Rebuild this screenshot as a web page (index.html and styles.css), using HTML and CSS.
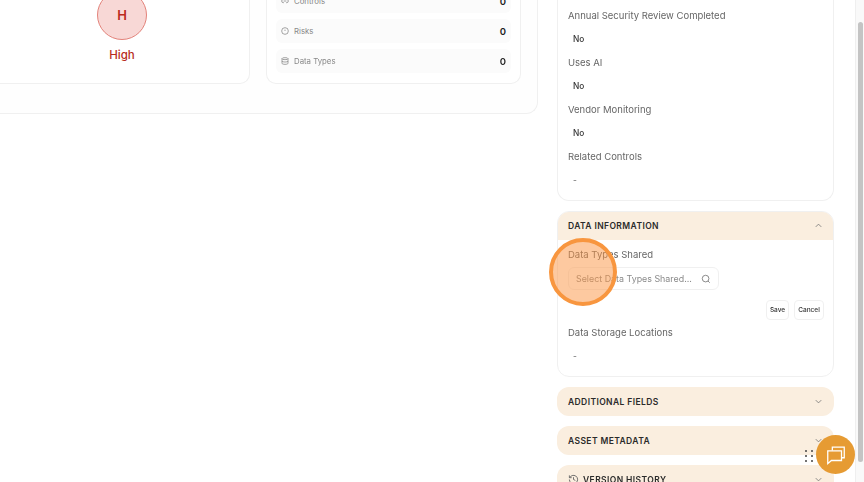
FILE: index.html
```html
<!DOCTYPE html>
<html lang="en">
<head>
<meta charset="utf-8">
<title>Vendor details</title>
<link rel="stylesheet" href="styles.css">
</head>
<body>
<div class="page">
  <main class="main">
    <div class="main-card">
      <section class="card risk-card">
        <div class="risk-circle">H</div>
        <div class="risk-label">High</div>
      </section>
      <section class="card stats-card">
        <div class="stat">
          <span class="stat-name">
            <svg class="stat-icon" viewBox="0 0 24 24"><path d="M9 17H7A5 5 0 0 1 7 7h2M15 7h2a5 5 0 0 1 0 10h-2M8 12h8"/></svg>
            Controls
          </span>
          <span class="stat-value">0</span>
        </div>
        <div class="stat">
          <span class="stat-name">
            <svg class="stat-icon" viewBox="0 0 24 24"><circle cx="12" cy="12" r="10"/><path d="M12 8v4M12 16h.01"/></svg>
            Risks
          </span>
          <span class="stat-value">0</span>
        </div>
        <div class="stat">
          <span class="stat-name">
            <svg class="stat-icon" viewBox="0 0 24 24"><ellipse cx="12" cy="5" rx="9" ry="3"/><path d="M3 5v14c0 1.7 4 3 9 3s9-1.300 9-3V5M3 12c0 1.700 4 3 9 3s9-1.300 9-3"/></svg>
            Data Types
          </span>
          <span class="stat-value">0</span>
        </div>
      </section>
    </div>
  </main>

  <aside class="panel">
    <section class="panel-card top-card">
      <div class="field"><div class="field-label">Annual Security Review Completed</div><div class="field-value">No</div></div>
      <div class="field"><div class="field-label">Uses AI</div><div class="field-value">No</div></div>
      <div class="field"><div class="field-label">Vendor Monitoring</div><div class="field-value">No</div></div>
      <div class="field"><div class="field-label">Related Controls</div><div class="field-value muted">-</div></div>
    </section>

    <section class="panel-card data-card">
      <header class="acc-head">
        <span class="acc-title">DATA INFORMATION</span>
        <svg class="chev" viewBox="0 0 24 24"><path d="M6 15l6-6 6 6"/></svg>
      </header>
      <div class="data-body">
        <div class="field-label">Data Types Shared</div>
        <div class="select">
          <span class="select-text">Select Data Types Shared...</span>
          <svg class="search" viewBox="0 0 24 24"><circle cx="11" cy="11" r="8"/><path d="M21 21l-4.300-4.300"/></svg>
        </div>
        <div class="actions">
          <button class="btn btn-save">Save</button>
          <button class="btn btn-cancel">Cancel</button>
        </div>
        <div class="field-label storage-label">Data Storage Locations</div>
        <div class="field-value muted">-</div>
      </div>
    </section>

    <section class="acc-closed">
      <span class="acc-title">ADDITIONAL FIELDS</span>
      <svg class="chev" viewBox="0 0 24 24"><path d="M6 9l6 6 6-6"/></svg>
    </section>
    <section class="acc-closed">
      <span class="acc-title">ASSET METADATA</span>
      <svg class="chev" viewBox="0 0 24 24"><path d="M6 9l6 6 6-6"/></svg>
    </section>
    <section class="acc-closed">
      <span class="acc-title with-icon">
        <svg class="history" viewBox="0 0 24 24"><path d="M3 12a9 9 0 1 0 2.600-6.400L3 8M3 3v5h5M12 7v5l4 2"/></svg>
        VERSION HISTORY
      </span>
      <svg class="chev" viewBox="0 0 24 24"><path d="M6 9l6 6 6-6"/></svg>
    </section>
  </aside>

  <div class="scrollbar"><div class="thumb"></div></div>

  <div class="click-marker"></div>

  <div class="drag-dots"><i></i><i></i><i></i><i></i><i></i><i></i></div>
  <button class="chat" aria-label="Chat">
    <svg viewBox="0 0 24 24"><path d="M8 7V3.500h13V15h-3"/><path d="M3 7.500h15V18H7l-4 3.500z"/></svg>
  </button>
</div>
</body>
</html>
```
FILE: styles.css
```css
* { box-sizing: border-box; }
html, body { margin: 0; padding: 0; height: 100%; }
body {
  font-family: Inter, "Liberation Sans", sans-serif;
  background: #fff;
  color: #333;
  overflow: hidden;
}
.page {
  position: relative;
  width: 864px;
  height: 482px;
  display: flex;
  align-items: flex-start;
  overflow: hidden;
  filter: blur(0.45px);
}

/* left column */
.main { width: 538px; height: 114px; flex: none; }
.main-card {
  height: 114px;
  display: flex;
  gap: 16px;
  padding: 0 16px 30px 0;
  border: 1px solid #f0f0f0;
  border-width: 0 1px 1px 0;
  border-radius: 0 0 12px 0;
  background: #fefefe;
}
.card {
  height: 84px;
  background: #fff;
  border: 1px solid #f0f0f0;
  border-top: 0;
  border-radius: 0 0 10px 10px;
  display: flex;
  flex-direction: column;
  justify-content: flex-end;
}
.risk-card {
  width: 250px;
  border-left: 0;
  border-radius: 0 0 10px 0;
  align-items: center;
  padding: 0 5px 20px 0;
}
.risk-circle {
  width: 50px;
  height: 50px;
  flex: none;
  border-radius: 50%;
  background: #f8d8d6;
  border: 1px solid #e3837b;
  color: #bb2a20;
  font-size: 13px;
  font-weight: 600;
  display: flex;
  align-items: center;
  justify-content: center;
}
.risk-label {
  margin-top: 7px;
  color: #b82a20;
  font-size: 11.500px;
  font-weight: 500;
  line-height: 16px;
}
.stats-card {
  width: 255px;
  padding: 0 9px 10px;
  gap: 6px;
}
.stat {
  height: 24px;
  flex: none;
  padding: 0 5px 0 5px;
  border-radius: 6px;
  background: #fbfbfb;
  display: flex;
  align-items: center;
  justify-content: space-between;
}
.stat-name {
  display: flex;
  align-items: center;
  gap: 5px;
  color: #888;
  font-size: 7.800px;
}
.stat-icon {
  width: 8px;
  height: 8px;
  fill: none;
  stroke: #777;
  stroke-width: 2;
}
.stat-value { color: #222; font-size: 9.500px; font-weight: 600; }

/* right column */
.panel {
  width: 277px;
  flex: none;
  margin-left: 19px;
  display: flex;
  flex-direction: column;
}
.panel-card {
  background: #fff;
  border: 1px solid #f0f0f0;
  border-radius: 12px;
}
.top-card {
  height: 201px;
  border-top: 0;
  border-radius: 0 0 12px 12px;
  padding: 0 10px 9px;
  display: flex;
  flex-direction: column;
  justify-content: flex-end;
}
.field { height: 47px; flex: none; }
.field-label {
  color: #666;
  font-size: 9.500px;
  line-height: 14px;
}
.field-value {
  margin-top: 9px;
  padding-left: 5px;
  color: #333;
  font-size: 8.300px;
  font-weight: 500;
  line-height: 14px;
}
.top-card .field:last-child { height: 41px; }
.muted { color: #777; }
.data-card { margin-top: 10px; height: 166px; overflow: hidden; }
.acc-head {
  height: 29px;
  padding: 0 10px 0 11px;
  margin: -1px -1px 0;
  background: #faeedf;
  display: flex;
  align-items: center;
  justify-content: space-between;
}
.acc-title {
  color: #2a2a2a;
  font-size: 8.500px;
  font-weight: 600;
  letter-spacing: 0.400px;
}
.chev {
  width: 11px;
  height: 11px;
  fill: none;
  stroke: #777;
  stroke-width: 1.800;
}
.data-body { padding: 8px 9px 0 10px; }
.select {
  width: 151px;
  height: 23px;
  margin-top: 5px;
  padding: 0 7px 0 7px;
  background: #fff;
  border: 1px solid #f0f0f0;
  border-radius: 6px;
  display: flex;
  align-items: center;
  justify-content: space-between;
}
.select-text { color: #8a8a8a; font-size: 8.900px; white-space: nowrap; }
.search {
  width: 10px;
  height: 10px;
  fill: none;
  stroke: #666;
  stroke-width: 1.800;
}
.actions {
  margin-top: 10px;
  display: flex;
  justify-content: flex-end;
  gap: 5px;
}
.btn {
  height: 20px;
  padding: 0;
  background: #fff;
  border: 1px solid #f0f0f0;
  border-radius: 4px;
  color: #333;
  font-family: inherit;
  font-size: 6.500px;
  font-weight: 500;
}
.btn-save { width: 23px; }
.btn-cancel { width: 30px; }
.storage-label { margin-top: 6px; }
.acc-closed {
  height: 29px;
  flex: none;
  margin-top: 10px;
  padding: 0 10px 0 11px;
  background: #faeedf;
  border-radius: 12px;
  display: flex;
  align-items: center;
  justify-content: space-between;
}
.acc-title.with-icon { display: flex; align-items: center; gap: 4px; }
.history {
  width: 11px;
  height: 11px;
  fill: none;
  stroke: #666;
  stroke-width: 2;
}

/* scrollbar */
.scrollbar {
  width: 9px;
  height: 482px;
  flex: none;
  margin-left: 21px;
  padding: 22px 1px 0 2px;
  background: #f9f9f9;
  border-left: 1px solid #efefef;
}
.thumb { height: 440px; background: #c4c4c4; border-radius: 3px; }

/* overlays */
.click-marker {
  position: absolute;
  left: 549px;
  top: 238px;
  width: 68px;
  height: 68px;
  border-radius: 50%;
  background: rgba(252, 148, 66, 0.5);
  border: 4px solid #f8963f;
}
.drag-dots {
  position: absolute;
  left: 805px;
  top: 450px;
  width: 8px;
  display: grid;
  grid-template-columns: 2px 2px;
  justify-content: space-between;
  row-gap: 3px;
}
.drag-dots i { width: 2px; height: 2px; border-radius: 50%; background: #444; }
.chat {
  position: absolute;
  left: 816px;
  top: 435px;
  width: 39px;
  height: 39px;
  padding: 0;
  border: 0;
  border-radius: 50%;
  background: #e69b33;
  display: flex;
  align-items: center;
  justify-content: center;
}
.chat svg {
  width: 22px;
  height: 22px;
  fill: none;
  stroke: #fff;
  stroke-width: 1.400;
}
```
